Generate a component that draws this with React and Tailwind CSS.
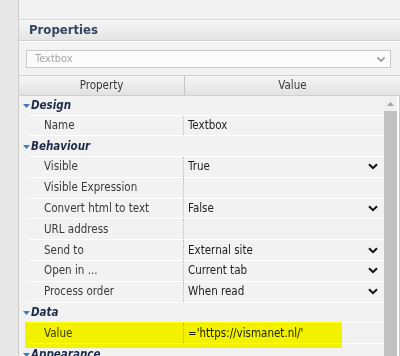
import React from 'react';

const FONT = "font-['DejaVu_Sans_Condensed','DejaVu_Sans',sans-serif]";

const groups = [
  {
    name: 'Design',
    first: true,
    rows: [{ label: 'Name', value: 'Textbox' }],
  },
  {
    name: 'Behaviour',
    rows: [
      { label: 'Visible', value: 'True', select: true },
      { label: 'Visible Expression', value: '' },
      { label: 'Convert html to text', value: 'False', select: true },
      { label: 'URL address', value: '' },
      { label: 'Send to', value: 'External site', select: true },
      { label: 'Open in ...', value: 'Current tab', select: true },
      { label: 'Process order', value: 'When read', select: true },
    ],
  },
  {
    name: 'Data',
    rows: [{ label: 'Value', value: "='https://vismanet.nl/'", highlight: true }],
  },
  { name: 'Appearance', rows: [] },
];

function Chevron({ className }) {
  return (
    <svg width="10" height="7" viewBox="0 0 10 7" className={className}>
      <path d="M1 1.2 L5 5.2 L9 1.2" fill="none" stroke="currentColor" strokeWidth="2" />
    </svg>
  );
}

function GroupRow({ name, first }) {
  return (
    <div className={`flex flex-col ${first ? 'h-[19.5px]' : 'h-[20.8px]'} shrink-0`}>
      <div className="flex-1 flex items-center pl-[4px]">
        <svg width="7" height="4" viewBox="0 0 7 4" className="mr-[1px] mt-[1px]">
          <path d="M0 0 H7 L3.5 4 Z" fill="#3b7cc0" />
        </svg>
        <span className="font-bold italic text-[11.5px] text-[#1d2a48]">{name}</span>
      </div>
      <div className="h-px bg-white ml-[9px]" />
    </div>
  );
}

function PropRow({ label, value, select, highlight }) {
  return (
    <div className="relative flex flex-col h-[20.8px] shrink-0">
      <div className="flex-1 flex items-stretch text-[11.5px]">
        <div className="w-[165px] shrink-0 flex items-center pl-[25px] text-[#3a3a3a] border-r border-dotted border-[#b8b8b8]">
          {label}
        </div>
        <div className="flex-1 flex items-center justify-between pl-[4px] pr-[6px] text-[#1e1e1e]">
          <span>{value}</span>
          {select && <Chevron className="text-[#111]" />}
        </div>
      </div>
      <div className="h-px bg-white ml-[9px]" />
      {highlight && (
        <div className="absolute left-[6px] w-[317px] top-[-1.5px] h-[26px] bg-[#ffff00] mix-blend-multiply" />
      )}
    </div>
  );
}

export default function App() {
  return (
    <div className={`w-[400px] h-[356px] flex bg-[#f2f2f2] overflow-hidden ${FONT}`}>
      {/* left strip */}
      <div className="w-[19px] shrink-0 bg-[#e8e8e8] border-r border-[#cdcdcd]" />

      <div className="flex-1 flex flex-col min-w-0">
        <div className="h-[20px] shrink-0 border-b border-[#d6d6d6]" />

        {/* Properties title */}
        <div className="h-[21px] shrink-0 flex items-center pl-[10px] bg-gradient-to-b from-[#f6f6f6] to-[#e4e4e4] border-b border-[#d2d2d2]">
          <span className="font-bold text-[13px] text-[#34445f]">Properties</span>
        </div>
        <div className="h-px bg-white shrink-0" />

        {/* component selector */}
        <div className="shrink-0 pt-[8px] pb-[7px] pl-[7px] pr-[9px]">
          <div className="h-[18px] flex items-center justify-between bg-[#fbfbfb] border border-[#c9c9c9] pl-[8px] pr-[4px]">
            <span className="text-[11px] text-[#a6a6a6]">Textbox</span>
            <Chevron className="text-[#9a9a9a] scale-90" />
          </div>
        </div>

        {/* column header */}
        <div className="h-[21px] shrink-0 flex border-t border-b border-[#cfcfcf] bg-gradient-to-b from-[#f5f5f5] to-[#e2e2e2] text-[11.5px] text-[#3a3a3a]">
          <div className="w-[166px] flex items-center justify-center border-r border-[#c4c4c4]">Property</div>
          <div className="flex-1 flex items-center justify-center">Value</div>
        </div>

        {/* body */}
        <div className="flex-1 flex min-h-0">
          <div className="flex-1 flex flex-col overflow-hidden">
            {groups.map((g) => (
              <React.Fragment key={g.name}>
                <GroupRow name={g.name} first={g.first} />
                {g.rows.map((r) => (
                  <PropRow key={r.label} {...r} />
                ))}
              </React.Fragment>
            ))}
          </div>
          {/* scrollbar */}
          <div className="w-[13px] shrink-0 flex flex-col bg-[#f0f0f0]">
            <div className="h-[15px] flex items-center justify-center">
              <svg width="7" height="4" viewBox="0 0 7 4">
                <path d="M0 4 H7 L3.5 0 Z" fill="#a3a3a3" />
              </svg>
            </div>
            <div className="flex-1 bg-[#c1c1c1]" />
          </div>
          <div className="w-[2px] shrink-0 bg-white" />
          <div className="w-px shrink-0 bg-[#cbcbcb]" />
        </div>
      </div>
    </div>
  );
}
